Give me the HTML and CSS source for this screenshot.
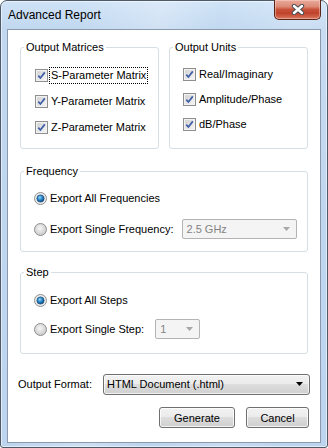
FILE: index.html
```html
<!DOCTYPE html>
<html>
<head>
<meta charset="utf-8">
<title>Advanced Report</title>
<link rel="stylesheet" href="styles.css">
</head>
<body>
<div class="window">
  <div class="titlebar">
    <span class="title">Advanced Report</span>
    <div class="close">
      <svg width="14" height="11" viewBox="0 0 14 11">
        <path d="M3 2 L11 9 M11 2 L3 9" stroke="#4a4f57" stroke-width="4.4" stroke-linecap="round" fill="none"/>
        <path d="M3 2 L11 9 M11 2 L3 9" stroke="#ffffff" stroke-width="2.4" stroke-linecap="round" fill="none"/>
      </svg>
    </div>
  </div>
  <div class="client">
    <div class="toprow">
      <fieldset class="group">
        <legend>Output Matrices</legend>
        <div class="inner matrices">
          <div class="opt"><svg class="cb" width="13" height="13" viewBox="0 0 13 13"><use href="#chk"/></svg><span class="lbl focus">S-Parameter Matrix</span></div>
          <div class="opt"><svg class="cb" width="13" height="13" viewBox="0 0 13 13"><use href="#chk"/></svg><span class="lbl">Y-Parameter Matrix</span></div>
          <div class="opt"><svg class="cb" width="13" height="13" viewBox="0 0 13 13"><use href="#chk"/></svg><span class="lbl">Z-Parameter Matrix</span></div>
        </div>
      </fieldset>
      <fieldset class="group">
        <legend>Output Units</legend>
        <div class="inner units">
          <div class="opt"><svg class="cb" width="13" height="13" viewBox="0 0 13 13"><use href="#chk"/></svg><span class="lbl">Real/Imaginary</span></div>
          <div class="opt"><svg class="cb" width="13" height="13" viewBox="0 0 13 13"><use href="#chk"/></svg><span class="lbl">Amplitude/Phase</span></div>
          <div class="opt"><svg class="cb" width="13" height="13" viewBox="0 0 13 13"><use href="#chk"/></svg><span class="lbl">dB/Phase</span></div>
        </div>
      </fieldset>
    </div>

    <fieldset class="group freq">
      <legend>Frequency</legend>
      <div class="inner freq-inner">
        <div class="opt tall"><svg class="rb" width="13" height="13" viewBox="0 0 13 13"><use href="#radio-on"/></svg><span class="lbl">Export All Frequencies</span></div>
        <div class="opt tall"><svg class="rb" width="13" height="13" viewBox="0 0 13 13"><use href="#radio-off"/></svg><span class="lbl">Export Single Frequency:</span>
          <div class="combo disabled combo-freq"><span class="ctext">2.5 GHz</span><svg class="carrow" width="7" height="4" viewBox="0 0 7 4"><path d="M0 0 H7 L3.5 4 Z" fill="#a7a7a7"/></svg></div>
        </div>
      </div>
    </fieldset>

    <fieldset class="group step">
      <legend>Step</legend>
      <div class="inner step-inner">
        <div class="opt tall"><svg class="rb" width="13" height="13" viewBox="0 0 13 13"><use href="#radio-on"/></svg><span class="lbl">Export All Steps</span></div>
        <div class="opt tall"><svg class="rb" width="13" height="13" viewBox="0 0 13 13"><use href="#radio-off"/></svg><span class="lbl">Export Single Step:</span>
          <div class="combo disabled combo-step"><span class="ctext">1</span><svg class="carrow" width="7" height="4" viewBox="0 0 7 4"><path d="M0 0 H7 L3.5 4 Z" fill="#a7a7a7"/></svg></div>
        </div>
      </div>
    </fieldset>

    <div class="format-row">
      <span class="format-label">Output Format:</span>
      <div class="combo active combo-format"><span class="ctext">HTML Document (.html)</span><svg class="carrow" width="7" height="4" viewBox="0 0 7 4"><path d="M0 0 H7 L3.5 4 Z" fill="#000"/></svg></div>
    </div>

    <div class="buttons">
      <button class="btn btn-generate">Generate</button>
      <button class="btn btn-cancel">Cancel</button>
    </div>
  </div>
</div>

<svg width="0" height="0" class="defs">
  <defs>
    <linearGradient id="cbfill" x1="0" y1="0" x2="1" y2="1">
      <stop offset="0" stop-color="#cfcfcf"/>
      <stop offset="1" stop-color="#f7f7f7"/>
    </linearGradient>
    <radialGradient id="roff" cx="0.45" cy="0.4" r="0.6">
      <stop offset="0" stop-color="#f6f6f6"/>
      <stop offset="1" stop-color="#c9c9c9"/>
    </radialGradient>
    <radialGradient id="ron" cx="0.4" cy="0.35" r="0.7">
      <stop offset="0" stop-color="#8fd6fb"/>
      <stop offset="0.5" stop-color="#2a86c8"/>
      <stop offset="1" stop-color="#0d3f74"/>
    </radialGradient>
    <g id="chk">
      <rect x="0.5" y="0.5" width="12" height="12" fill="#f4f4f4" stroke="#8f8f8f"/>
      <rect x="2" y="2" width="9" height="9" fill="url(#cbfill)" stroke="#e9e9e9" stroke-width="0.5"/>
      <path d="M3.3 6.6 L5.4 9 L9.8 3.4" stroke="#3f5ea8" stroke-width="1.7" fill="none"/>
    </g>
    <g id="radio-off">
      <circle cx="6.5" cy="6.5" r="6" fill="url(#roff)" stroke="#8e8f8f"/>
    </g>
    <g id="radio-on">
      <circle cx="6.5" cy="6.5" r="6" fill="#ececec" stroke="#8e8f8f"/>
      <circle cx="6.5" cy="6.5" r="3.6" fill="url(#ron)" stroke="#1c4f80" stroke-width="0.8"/>
    </g>
  </defs>
</svg>
</body>
</html>
```

FILE: styles.css
```css
html, body {
  margin: 0;
  padding: 0;
  background: #ffffff;
}

.defs {
  position: absolute;
  width: 0;
  height: 0;
}

.window {
  box-sizing: border-box;
  width: 328px;
  height: 448px;
  border: 1px solid #4f5a68;
  border-radius: 7px 7px 3px 3px;
  background:
    linear-gradient(100deg, rgba(255,255,255,0) 20%, rgba(255,255,255,0.25) 40%, rgba(255,255,255,0) 55%, rgba(255,255,255,0.18) 75%, rgba(255,255,255,0) 90%),
    linear-gradient(180deg, #cfe3f7 0px, #c1d8f0 28px, #bcd4ee 100%);
  box-shadow: inset 0 0 0 1px rgba(255,255,255,0.55);
  display: flex;
  flex-direction: column;
  padding: 0 6px 4px 6px;
  font-family: "Liberation Sans", Arial, sans-serif;
  font-size: 11px;
  color: #000;
}

.titlebar {
  height: 28px;
  display: flex;
  align-items: center;
  padding-left: 1px;
}

.title {
  font-size: 12px;
  color: #000;
}

.close {
  margin-left: auto;
  margin-top: -9px;
  align-self: flex-start;
  box-sizing: border-box;
  width: 47px;
  height: 20px;
  margin-top: -1px;
  border: 1px solid #5b2419;
  border-top: none;
  border-radius: 0 0 5px 5px;
  background: linear-gradient(180deg, #e9aa9c 0%, #dc8a76 35%, #c8513a 50%, #c0432c 70%, #d9785e 100%);
  box-shadow: inset 0 0 0 1px rgba(255,220,210,0.45);
  display: flex;
  align-items: center;
  justify-content: center;
}

.client {
  flex: 1;
  border: 1px solid #8a9aac;
  background: #ffffff;
  display: flex;
  flex-direction: column;
  padding: 10px 0 0 0;
}

.toprow {
  display: flex;
  gap: 10px;
  padding: 0 12px;
}

.group {
  margin: 0;
  padding: 0;
  min-width: 0;
  border: 1px solid #d5dfe5;
  border-radius: 3px;
  box-sizing: border-box;
}

.toprow .group {
  width: 139px;
  height: 109px;
}

.group legend {
  margin-left: 3px;
  padding: 0 2px;
  line-height: 14px;
  height: 14px;
}

.inner {
  display: flex;
  flex-direction: column;
}

.matrices {
  padding: 12px 0 0 14px;
  gap: 8px;
}

.units {
  padding: 11px 0 0 13px;
  gap: 7px;
}

.opt {
  display: flex;
  align-items: center;
  height: 18px;
}

.opt.tall {
  height: 20px;
}

.cb, .rb {
  flex: none;
  display: block;
}

.lbl {
  margin-left: 1px;
  border: 1px dotted transparent;
  padding: 0 1px 0 1px;
  line-height: 15px;
  white-space: nowrap;
}

.lbl.focus {
  border-color: #000;
}

.freq {
  margin: 15px 12px 0 12px;
}

.freq-inner {
  padding: 10px 0 12px 13px;
  gap: 11px;
}

.step {
  margin: 13px 12px 0 12px;
}

.step-inner {
  padding: 11px 0 14px 13px;
  gap: 9px;
}

.combo {
  box-sizing: border-box;
  height: 20px;
  display: flex;
  align-items: center;
  border-radius: 2px;
}

.combo .ctext {
  flex: 1;
  white-space: nowrap;
}

.combo.disabled {
  border: 1px solid #b4b4b4;
  background: #f4f4f4;
  color: #838383;
  padding: 0 4px 0 4px;
}

.combo.disabled .carrow {
  margin-right: 2px;
}

.combo-freq {
  width: 115px;
  margin-left: 6px;
}

.combo-step {
  width: 45px;
  margin-left: 9px;
}

.format-row {
  margin-top: 20px;
  display: flex;
  align-items: center;
  padding-left: 10px;
  height: 20px;
}

.format-label {
  width: 85px;
}

.combo.active {
  width: 207px;
  border: 1px solid #707070;
  border-radius: 3px;
  background: linear-gradient(180deg, #f2f2f2 0%, #ebebeb 49%, #dddddd 50%, #cfcfcf 100%);
  box-shadow: inset 0 0 0 1px rgba(255,255,255,0.7);
  padding: 0 6px 0 3px;
  height: 21px;
}

.buttons {
  margin-top: 13px;
  display: flex;
  justify-content: flex-end;
  gap: 11px;
  padding-right: 11px;
}

.btn {
  box-sizing: border-box;
  height: 21px;
  border: 1px solid #707070;
  border-radius: 3px;
  background: linear-gradient(180deg, #f2f2f2 0%, #ebebeb 49%, #dddddd 50%, #cfcfcf 100%);
  box-shadow: inset 0 0 0 1px rgba(255,255,255,0.75);
  font-family: "Liberation Sans", Arial, sans-serif;
  font-size: 11px;
  color: #000;
  padding: 0;
}

.btn-generate {
  width: 76px;
}

.btn-cancel {
  width: 63px;
}
```
